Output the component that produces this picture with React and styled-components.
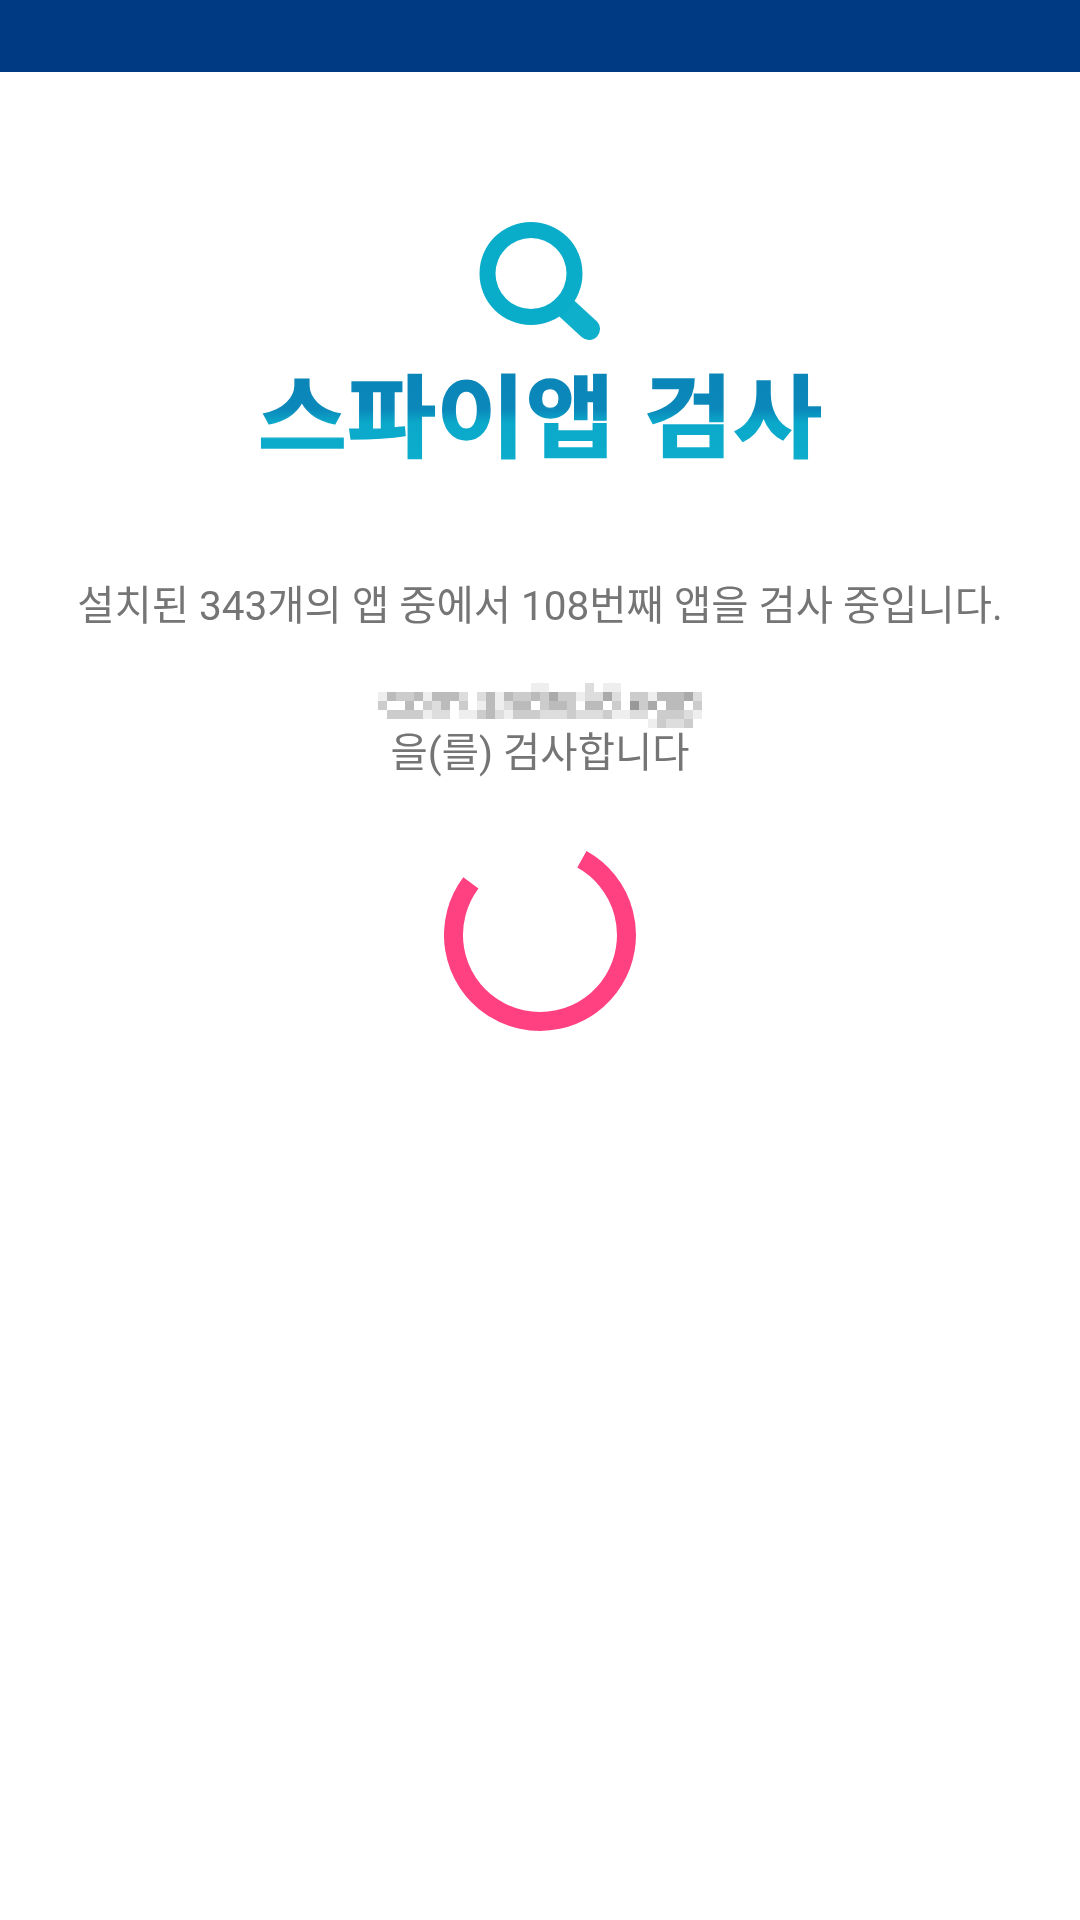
import React from "react";
import styled, { createGlobalStyle } from "styled-components";

const GlobalStyle = createGlobalStyle`
  html, body {
    margin: 0;
    padding: 0;
    background: #fff;
  }
`;

const Page = styled.div`
  width: 1080px;
  height: 1920px;
  background: #fff;
  overflow: hidden;
  font-family: Roboto, "Noto Sans CJK KR", sans-serif;
`;

const StatusBar = styled.div`
  height: 72px;
  background: #003a82;
`;

const Content = styled.div`
  display: flex;
  flex-direction: column;
  align-items: center;
  padding-top: 148px;
`;

const Logo = styled.div`
  display: flex;
  flex-direction: column;
  align-items: center;
  filter: blur(0.6px);
`;

const Title = styled.h1`
  margin: 15px 0 0;
  font-family: "Noto Sans CJK KR", sans-serif;
  font-size: 97px;
  font-weight: 700;
  line-height: 108px;
  word-spacing: 7px;
  white-space: nowrap;
  transform: scale(1, 0.93);
  background: linear-gradient(180deg, #0a84b7 0%, #0b88ba 48%, #0ba8ca 62%, #0cadcd 100%);
  -webkit-background-clip: text;
  background-clip: text;
  color: transparent;
  -webkit-text-stroke: 1.5px transparent;
`;

const Message = styled.p`
  margin: ${(p) => p.$top}px 0 0;
  font-size: 40.5px;
  line-height: 50px;
  color: #757575;
  white-space: nowrap;
  opacity: 0.999;
`;

const Mosaic = styled.svg`
  display: block;
  margin: 52px 0 0;
`;

const Spinner = styled.svg`
  display: block;
  margin-top: 61px;
`;

// 마스킹된 패키지명 픽셀 (hex 밝기)
const MOSAIC_ROWS = [
  "fffffffffffffffffeeffffdfeefffffffff",
  "ebccbebbbdfdbebccbcaccedd adfccebbbad",
  "cffbfcdbfcfebedbbfcbbcfbbfcf9cafbbfc",
  "fccccedd feecbdeccc dddcdddceeddfcccde",
  "ffffffffffffffffffffffffffffffecddcf",
].map((r) => r.replace(/ /g, ""));

const CELL = 9;

const PackageMosaic = () => (
  <Mosaic width={CELL * 36} height={CELL * 5} shapeRendering="crispEdges">
    {MOSAIC_ROWS.map((row, y) =>
      row.split("").map((c, x) => {
        const v = parseInt(c, 16) * 17;
        return (
          <rect
            key={`${x}-${y}`}
            x={x * CELL}
            y={y * CELL}
            width={CELL}
            height={CELL}
            fill={`rgb(${v},${v},${v})`}
          />
        );
      })
    )}
  </Mosaic>
);

const SearchIcon = () => (
  <svg width="128" height="122" viewBox="0 0 128 122" style={{ display: "block" }}>
    <line x1="88" y1="86" x2="113" y2="109" stroke="#0dafcb" strokeWidth="22" strokeLinecap="round" />
    <path
      fillRule="evenodd"
      fill="#0aadc9"
      d="M3.5 53.5a51.5 51.5 0 1 0 103 0a51.5 51.5 0 1 0 -103 0zM19.5 53.5a35.5 35.5 0 1 1 71 0a35.5 35.5 0 1 1 -71 0z"
    />
  </svg>
);

const App = () => {
  return (
    <Page>
      <GlobalStyle />
      <StatusBar />
      <Content>
        <Logo>
          <SearchIcon />
          <Title>스파이앱 검사</Title>
        </Logo>
        <Message $top={116}>설치된 343개의 앱 중에서 108번째 앱을 검사 중입니다.</Message>
        <PackageMosaic />
        <Message $top={0}>을(를) 검사합니다</Message>
        <Spinner width="192" height="192" viewBox="0 0 192 192">
          <path
            d="M137.9 20.3A86.5 86.5 0 1 1 26.9 43.9"
            fill="none"
            stroke="#ff4081"
            strokeWidth="19"
          />
        </Spinner>
      </Content>
    </Page>
  );
};

export default App;
